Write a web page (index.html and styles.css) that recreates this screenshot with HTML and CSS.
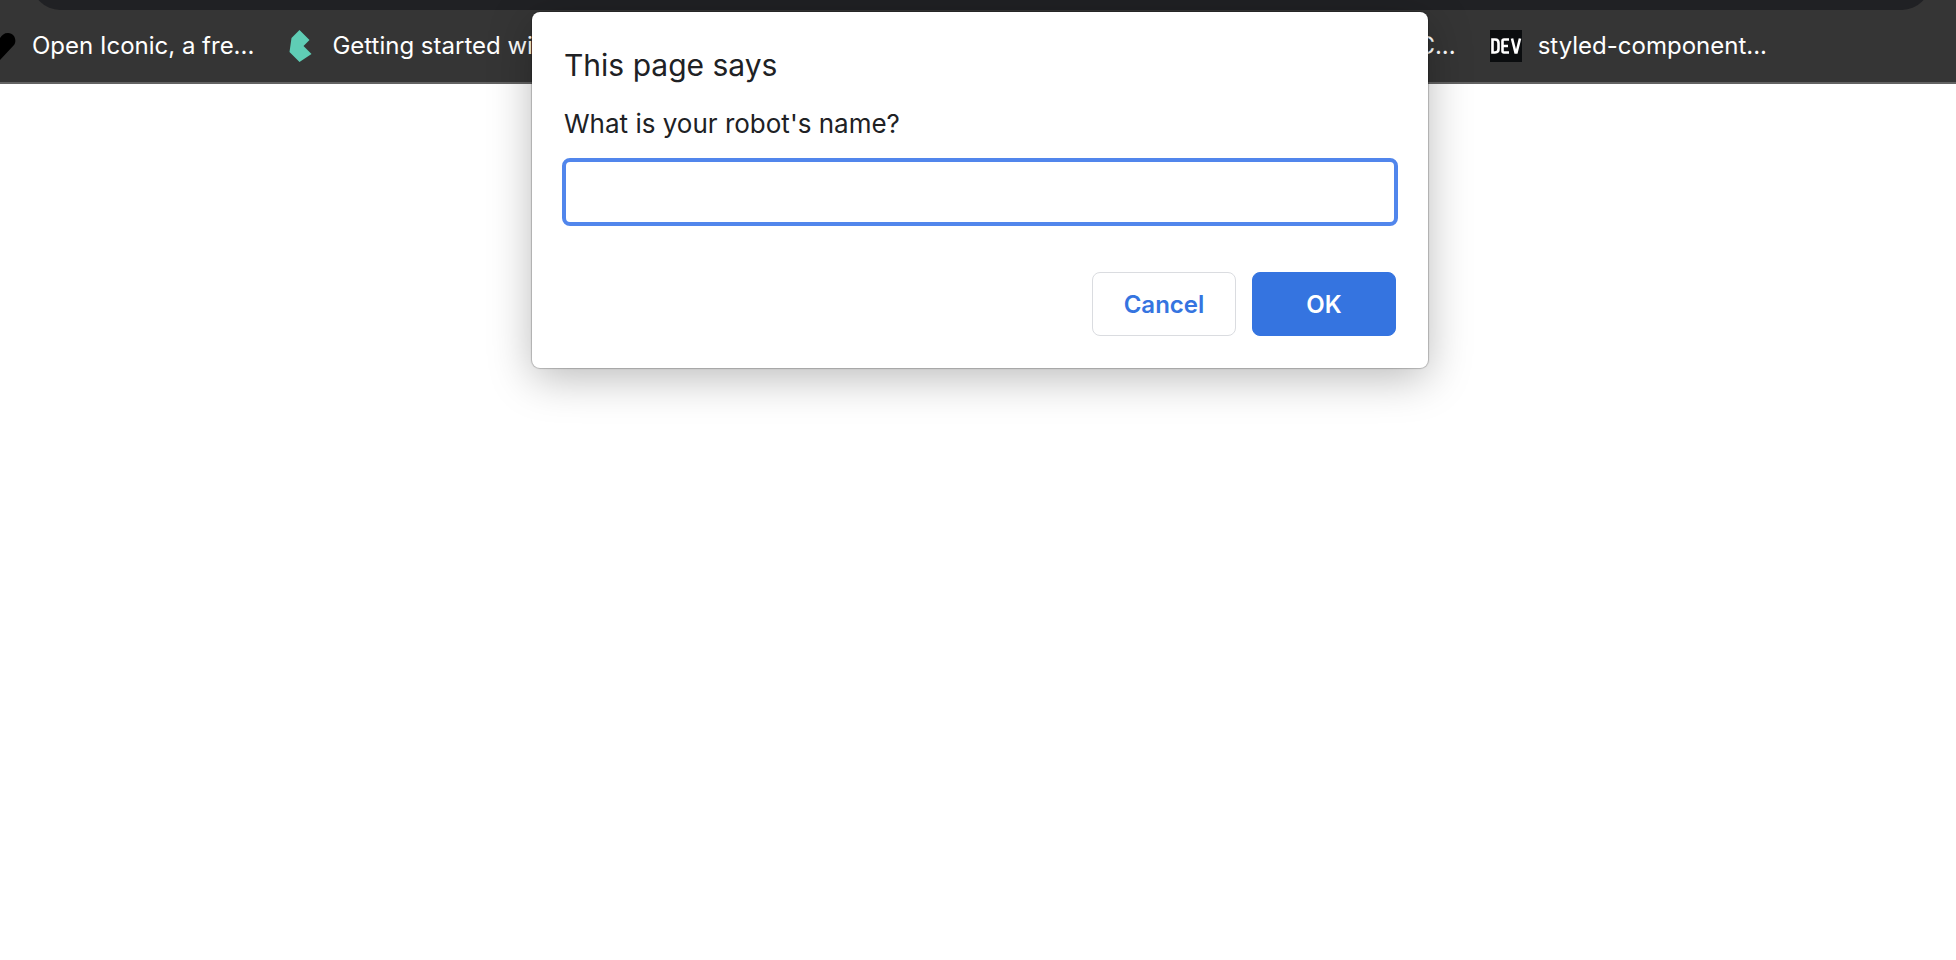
FILE: index.html
```html
<!DOCTYPE html>
<html lang="en">
<head>
<meta charset="utf-8">
<meta name="viewport" content="width=device-width, initial-scale=1">
<title>This page says</title>
<link rel="stylesheet" href="styles.css">
</head>
<body>
<header class="toolbar">
  <div class="address-bar"></div>
  <nav class="bookmarks" aria-label="Bookmarks">
    <a class="bookmark bookmark-first" href="#">
      <svg class="bookmark-icon" viewBox="0 0 32 32" aria-hidden="true"><path d="M16 30L2 15C-1 11 1 3 8 3c4 0 6 2 8 5 2-3 4-5 8-5 7 0 9 8 6 12z" fill="#000"/></svg>
      <span>Open Iconic, a fre...</span>
    </a>
    <a class="bookmark" href="#">
      <svg class="bookmark-icon" viewBox="0 0 32 32" aria-hidden="true"><path d="M15.500 0L25.500 10L19.500 16L27.500 24L15.500 32L5.500 22L7.500 8z" fill="#5fcdb5"/></svg>
      <span>Getting started wi</span>
    </a>
    <a class="bookmark bookmark-end" href="#"><span>C...</span></a>
    <a class="bookmark" href="#">
      <svg class="bookmark-icon" viewBox="0 0 32 32" aria-hidden="true"><path d="M0 0h32v32H0z" fill="#0b0d0f"/><path d="M2.500 9.500v13h2.500c3 0 3.500-1.500 3.500-3.500v-6c0-2-.5-3.500-3.500-3.500zM19 9.500h-5c-1 0-1.500.5-1.500 1.500v10c0 1 .5 1.500 1.500 1.500h5M12.500 16H18M22 8.500l3.500 14h1l3.500-14" fill="none" stroke="#fff" stroke-width="2.600"/></svg>
      <span>styled-component...</span>
    </a>
  </nav>
</header>
<form class="dialog" role="dialog" aria-labelledby="dialog-title">
  <h1 class="dialog-title" id="dialog-title">This page says</h1>
  <label class="dialog-message" for="robot-name">What is your robot's name?</label>
  <input class="dialog-input" id="robot-name" type="text" autocomplete="off">
  <div class="dialog-actions">
    <button class="button button-cancel" type="button">Cancel</button>
    <button class="button button-ok" type="submit">OK</button>
  </div>
</form>
</body>
</html>
```
FILE: styles.css
```css
* {
  box-sizing: border-box;
}

body {
  margin: 0;
  min-height: 100vh;
  background: #fff;
  color: #202124;
  font-family: Inter, "Liberation Sans", sans-serif;
}

.toolbar {
  background: #353535;
  border-bottom: 2px solid #636363;
  overflow: hidden;
}

.address-bar {
  height: 56px;
  margin: -46px 26px 0 32px;
  border-radius: 28px;
  background: #202124;
}

.bookmarks {
  display: flex;
  align-items: center;
  gap: 30px;
  height: 72px;
  padding-right: 189px;
}

.bookmark {
  display: flex;
  align-items: center;
  gap: 16px;
  height: 32px;
  color: #fff;
  font-size: 24px;
  line-height: 32px;
  text-decoration: none;
  white-space: nowrap;
}

.bookmark-first {
  margin-left: -16px;
}

.bookmark-end {
  margin-left: auto;
  margin-right: 4px;
}

.bookmark-icon {
  flex: none;
  width: 32px;
  height: 32px;
}

.dialog {
  position: absolute;
  top: 12px;
  left: calc(50% + 2px);
  transform: translateX(-50%);
  display: flex;
  flex-direction: column;
  width: 896px;
  max-width: 100%;
  padding: 32px;
  border-radius: 8px;
  background: #fff;
  box-shadow: 0 0 1px 1px rgba(0, 0, 0, 0.22), 0 10px 44px rgba(0, 0, 0, 0.27);
}

.dialog-title {
  margin: 0;
  font-size: 30px;
  font-weight: 400;
  line-height: 42px;
}

.dialog-message {
  margin-top: 20px;
  font-size: 26px;
  line-height: 36px;
}

.dialog-input {
  height: 68px;
  margin: 16px -2px 0;
  padding: 0 16px;
  border: 4px solid #5186ec;
  border-radius: 8px;
  outline: none;
  background: #fff;
  color: inherit;
  font: inherit;
  font-size: 26px;
}

.dialog-actions {
  display: flex;
  justify-content: flex-end;
  gap: 16px;
  margin-top: 46px;
}

.button {
  width: 144px;
  height: 64px;
  padding: 0;
  border: 1px solid #dadce0;
  border-radius: 8px;
  background: #fff;
  color: #3574e0;
  font-family: inherit;
  font-size: 24px;
  font-weight: 600;
}

.button-ok {
  border-color: #3574e0;
  background: #3574e0;
  color: #fff;
}
```
